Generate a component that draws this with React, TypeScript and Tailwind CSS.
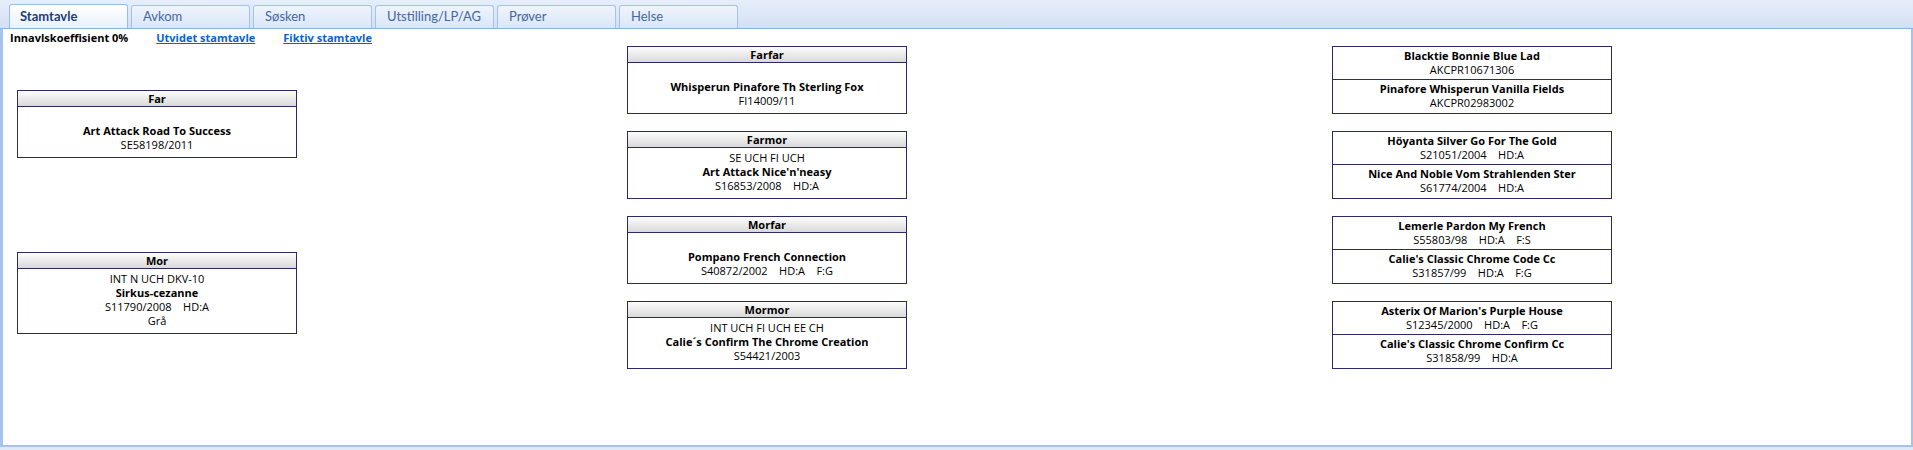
import React from "react";

type Dog = {
  title?: string;
  name: string;
  reg: string;
  extra?: string;
};

type Parent = {
  label: string;
  dog: Dog;
  blankTitle?: boolean;
};

const tabs = ["Stamtavle", "Avkom", "Søsken", "Utstilling/LP/AG", "Prøver", "Helse"];

const far: Parent = {
  label: "Far",
  blankTitle: true,
  dog: { name: "Art Attack Road To Success", reg: "SE58198/2011" },
};

const mor: Parent = {
  label: "Mor",
  dog: {
    title: "INT N UCH DKV-10",
    name: "Sirkus-cezanne",
    reg: "S11790/2008\u00a0\u00a0\u00a0\u00a0HD:A",
    extra: "Grå",
  },
};

const grandParents: Parent[] = [
  {
    label: "Farfar",
    blankTitle: true,
    dog: { name: "Whisperun Pinafore Th Sterling Fox", reg: "FI14009/11" },
  },
  {
    label: "Farmor",
    dog: {
      title: "SE UCH FI UCH",
      name: "Art Attack Nice'n'neasy",
      reg: "S16853/2008\u00a0\u00a0\u00a0\u00a0HD:A",
    },
  },
  {
    label: "Morfar",
    blankTitle: true,
    dog: {
      name: "Pompano French Connection",
      reg: "S40872/2002\u00a0\u00a0\u00a0\u00a0HD:A\u00a0\u00a0\u00a0\u00a0F:G",
    },
  },
  {
    label: "Mormor",
    dog: {
      title: "INT UCH FI UCH EE CH",
      name: "Calie´s Confirm The Chrome Creation",
      reg: "S54421/2003",
    },
  },
];

const greatPairs: [Dog, Dog][] = [
  [
    { name: "Blacktie Bonnie Blue Lad", reg: "AKCPR10671306" },
    { name: "Pinafore Whisperun Vanilla Fields", reg: "AKCPR02983002" },
  ],
  [
    { name: "Höyanta Silver Go For The Gold", reg: "S21051/2004\u00a0\u00a0\u00a0\u00a0HD:A" },
    { name: "Nice And Noble Vom Strahlenden Ster", reg: "S61774/2004\u00a0\u00a0\u00a0\u00a0HD:A" },
  ],
  [
    { name: "Lemerle Pardon My French", reg: "S55803/98\u00a0\u00a0\u00a0\u00a0HD:A\u00a0\u00a0\u00a0\u00a0F:S" },
    { name: "Calie's Classic Chrome Code Cc", reg: "S31857/99\u00a0\u00a0\u00a0\u00a0HD:A\u00a0\u00a0\u00a0\u00a0F:G" },
  ],
  [
    { name: "Asterix Of Marion's Purple House", reg: "S12345/2000\u00a0\u00a0\u00a0\u00a0HD:A\u00a0\u00a0\u00a0\u00a0F:G" },
    { name: "Calie's Classic Chrome Confirm Cc", reg: "S31858/99\u00a0\u00a0\u00a0\u00a0HD:A" },
  ],
];

function ParentBox({ parent }: { parent: Parent }) {
  const { dog } = parent;
  return (
    <div className="w-[280px] border border-[#2b2a66] bg-white">
      <div className="h-[16px] border-b border-[#2b2a66] bg-gradient-to-b from-[#fdfdfd] to-[#d9d9d9] text-center font-bold leading-[15px]">
        {parent.label}
      </div>
      <div className="pt-[3px] pb-[5px] text-center leading-[14px]">
        <div className="h-[14px]">{parent.blankTitle ? "" : dog.title}</div>
        <div className="font-bold">{dog.name}</div>
        <div>{dog.reg}</div>
        {dog.extra && <div>{dog.extra}</div>}
      </div>
    </div>
  );
}

function PairBox({ pair }: { pair: [Dog, Dog] }) {
  return (
    <div className="w-[280px] border border-[#2b2a66] bg-white text-center leading-[14px]">
      <div className="h-[33px] border-b border-[#2b2a66] pt-[2px]">
        <div className="font-bold">{pair[0].name}</div>
        <div>{pair[0].reg}</div>
      </div>
      <div className="h-[33px] pt-[2px]">
        <div className="font-bold">{pair[1].name}</div>
        <div>{pair[1].reg}</div>
      </div>
    </div>
  );
}

export default function App() {
  return (
    <div className="h-[450px] w-full overflow-hidden bg-[#dfe9f7] font-['Open_Sans',sans-serif] text-[11px] text-black">
      <div className="flex h-[29px] items-end gap-[3px] border-b border-[#8eb1e4] bg-gradient-to-b from-[#e6eefa] to-[#d3e0f3] pl-[9px] font-['Lato',sans-serif] text-[13px]">
        {tabs.map((t, i) => (
          <div
            key={t}
            className={
              i === 0
                ? "flex h-[24px] w-[119px] items-center rounded-t-[3px] border border-b-0 border-[#9bbbe8] bg-gradient-to-b from-[#ffffff] to-[#e9f1fc] pl-[10px] font-bold text-[#1d3d78]"
                : "flex h-[23px] w-[119px] items-center rounded-t-[3px] border border-b-0 border-[#a6c2ea] bg-gradient-to-b from-[#eef4fd] to-[#dae6f8] pl-[11px] text-[#4566a0]"
            }
          >
            {t}
          </div>
        ))}
      </div>
      <div className="h-[418px] border-r-2 border-b-2 border-l-[3px] border-[#a5c3ee] bg-white">
        <div className="flex h-[17px] items-center gap-[28px] pt-[2px] pl-[7px] font-bold">
          <span>Innavlskoeffisient 0%</span>
          <a href="#" className="text-[#0b63c9] underline">
            Utvidet stamtavle
          </a>
          <a href="#" className="text-[#0b63c9] underline">
            Fiktiv stamtavle
          </a>
        </div>
        <div className="flex pl-[14px]">
          <div className="flex w-[280px] flex-col">
            <div className="mt-[44px]">
              <ParentBox parent={far} />
            </div>
            <div className="mt-[94px]">
              <ParentBox parent={mor} />
            </div>
          </div>
          <div className="ml-[330px] flex w-[280px] flex-col gap-[17px]">
            {grandParents.map((g) => (
              <ParentBox key={g.label} parent={g} />
            ))}
          </div>
          <div className="ml-[425px] flex w-[280px] flex-col gap-[17px]">
            {greatPairs.map((p, i) => (
              <PairBox key={i} pair={p} />
            ))}
          </div>
        </div>
      </div>
    </div>
  );
}
